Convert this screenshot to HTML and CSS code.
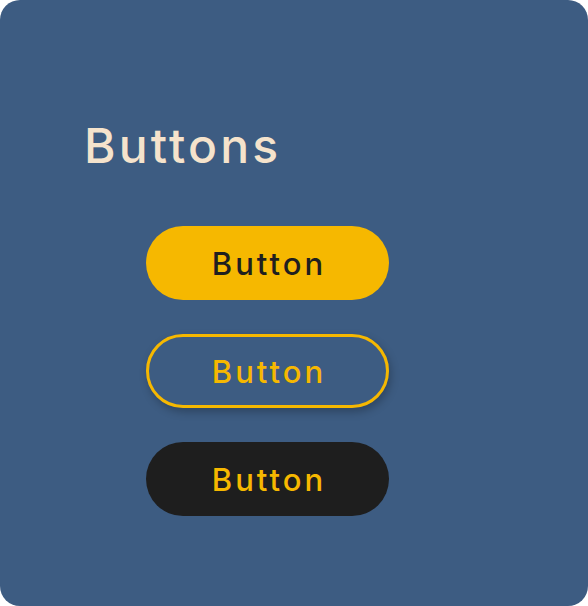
FILE: index.html
```html
<!DOCTYPE html>
<html>
<head>
<meta charset="utf-8">
<link rel="stylesheet" href="styles.css">
</head>
<body>
<main class="card">
  <h1 class="title">Buttons</h1>
  <div class="buttons">
    <button class="btn btn-primary">Button</button>
    <button class="btn btn-outline">Button</button>
    <button class="btn btn-dark">Button</button>
  </div>
</main>
</body>
</html>
```

FILE: styles.css
```css
html, body {
  margin: 0;
  padding: 0;
  background: #ffffff;
}
.card {
  box-sizing: border-box;
  width: 588px;
  height: 606px;
  background: #3d5c82;
  border-radius: 20px;
  padding: 112px 0 0 84px;
  font-family: "Inter", "Open Sans", sans-serif;
}
.title {
  margin: 0;
  font-size: 48px;
  line-height: 68px;
  font-weight: 500;
  letter-spacing: 3.2px;
  color: #f5e3cc;
}
.buttons {
  display: flex;
  flex-direction: column;
  gap: 34px;
  margin: 46px 0 0 62px;
}
.btn {
  box-sizing: border-box;
  width: 243px;
  height: 74px;
  border-radius: 37px;
  border: none;
  padding: 0 0 0 3px;
  font-family: "Inter", "Open Sans", sans-serif;
  font-size: 31px;
  font-weight: 500;
  letter-spacing: 3px;
  line-height: 1;
  cursor: pointer;
}
.btn-primary {
  background: #f6b800;
  color: #1f1f1f;
}
.btn-outline {
  background: transparent;
  border: 3px solid #f6b800;
  color: #f6b800;
  box-shadow: 2px 4px 8px rgba(0, 0, 0, 0.25);
}
.btn-dark {
  background: #1e1e1e;
  color: #f6b800;
}
```
